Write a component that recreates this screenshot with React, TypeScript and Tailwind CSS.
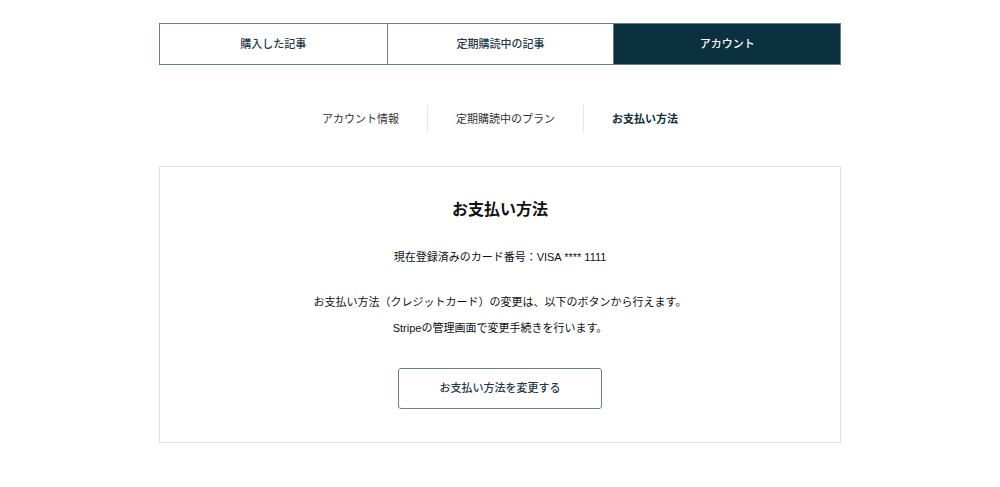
import React from 'react'

const font = { fontFamily: '"Liberation Sans", "Noto Sans CJK JP", sans-serif' }

const tabs = [
    { label: '購入した記事', active: false },
    { label: '定期購読中の記事', active: false },
    { label: 'アカウント', active: true },
]

const subNav = [
    { label: 'アカウント情報', active: false },
    { label: '定期購読中のプラン', active: false },
    { label: 'お支払い方法', active: true },
]

const App = () => {
    return (
        <div className="min-h-[487px] bg-white" style={font}>
            <div className="w-[682px] mx-auto pt-[23px]">
                {/* main tabs */}
                <div className="grid grid-cols-3 h-[42px] border border-[#6b7f88]">
                    {tabs.map((t, i) => (
                        <div
                            key={t.label}
                            className={
                                'flex items-center justify-center text-[11px] font-medium ' +
                                (i > 0 ? 'border-l border-[#6b7f88] ' : '') +
                                (t.active ? 'bg-[#0b3040] text-white' : 'bg-white text-[#1f3a48]')
                            }
                        >
                            {t.label}
                        </div>
                    ))}
                </div>

                {/* sub nav */}
                <div className="flex justify-center mt-[40px]">
                    {subNav.map((s, i) => (
                        <div
                            key={s.label}
                            className={
                                'h-[28px] px-[28px] flex items-center text-[11px] ' +
                                (i > 0 ? 'border-l border-[#e6e6e6] ' : '') +
                                (s.active ? 'font-bold text-[#0b3040]' : 'text-[#333]')
                            }
                        >
                            {s.label}
                        </div>
                    ))}
                </div>

                {/* card */}
                <div className="mt-[33px] border border-[#e2e2e2] flex flex-col items-center pt-[31px] pb-[33px] text-[#111]">
                    <h2 className="text-[16px] leading-[24px] font-bold">お支払い方法</h2>
                    <p className="mt-[25px] text-[11px] leading-[20px]">現在登録済みのカード番号：VISA **** 1111</p>
                    <p className="mt-[25px] text-[11px] leading-[20px]">お支払い方法（クレジットカード）の変更は、以下のボタンから行えます。</p>
                    <p className="mt-[6px] text-[11px] leading-[20px]">Stripeの管理画面で変更手続きを行います。</p>
                    <button className="mt-[30px] w-[204px] h-[41px] rounded-[3px] border border-[#6b7f88] bg-white text-[11px] font-medium text-[#1f3a48]">
                        お支払い方法を変更する
                    </button>
                </div>
            </div>
        </div>
    )
}

export default App
